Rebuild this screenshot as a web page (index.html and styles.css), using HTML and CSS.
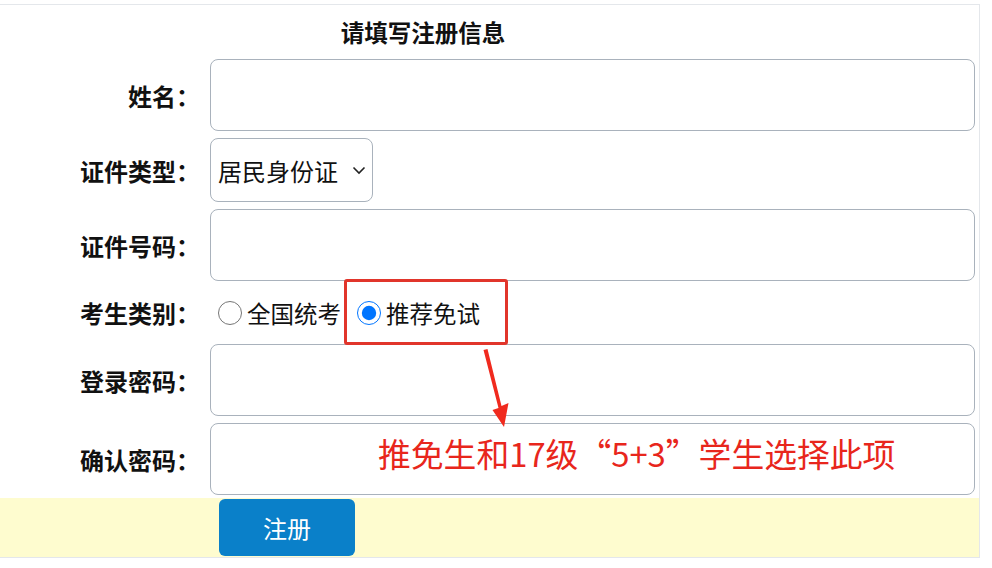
FILE: index.html
```html
<!DOCTYPE html>
<html lang="zh-CN">
<head>
  <meta charset="UTF-8" />
  <meta name="viewport" content="width=device-width, initial-scale=1.0" />
  <title>注册</title>
  <link rel="stylesheet" href="styles.css">
</head>
<body>
  <div class="reg-box">
    <h2 class="reg-title">请填写注册信息</h2>
    <form class="reg-form">
      <label class="row-label">姓名：</label>
      <div class="row-field"><input class="txt" type="text" /></div>

      <label class="row-label">证件类型：</label>
      <div class="row-field">
        <span class="sel-wrap">
          <select class="sel">
            <option>居民身份证</option>
            <option>护照</option>
          </select>
          <svg class="sel-arrow" width="14" height="9" viewBox="0 0 14 9"><path d="M1.5 1.5 L7 7 L12.5 1.5" fill="none" stroke="#222" stroke-width="1.6"/></svg>
        </span>
      </div>

      <label class="row-label">证件号码：</label>
      <div class="row-field"><input class="txt" type="text" /></div>

      <label class="row-label radio-label">考生类别：</label>
      <div class="row-field radios">
        <label class="opt"><input type="radio" name="kind" />全国统考</label>
        <label class="opt"><input type="radio" name="kind" checked />推荐免试</label>
      </div>

      <label class="row-label">登录密码：</label>
      <div class="row-field"><input class="txt" type="password" /></div>

      <label class="row-label">确认密码：</label>
      <div class="row-field"><input class="txt" type="password" /></div>
    </form>
    <div class="btn-bar">
      <button class="reg-btn" type="button">注册</button>
    </div>
  </div>

  <!-- annotation layer -->
  <div class="mark-box"></div>
  <svg class="mark-arrow" width="30" height="80" viewBox="480 348 30 80">
    <path d="M483.5 350 L487.5 349 L501.5 406 L508.5 403 L504 427 L492.5 410 L498.5 408 Z" fill="#f02a1e"/>
  </svg>
  <div class="mark-text">推免生和17级“5+3”学生选择此项</div>
</body>
</html>
```

FILE: styles.css
```css
body { margin: 0; background: #fff; color: #111; font-family: "Noto Sans CJK SC", "Noto Sans", sans-serif; }
.reg-box { margin-top: 4px; width: 979px; border-top: 1px solid #e4e7eb; border-right: 1px solid #e4e7eb; border-bottom: 1px solid #e4e7eb; }
.reg-title { margin: 0; height: 54px; line-height: 54px; width: 846px; text-align: center; font-size: 23.5px; font-weight: bold; }
.reg-form { display: grid; grid-template-columns: 210px 1fr; row-gap: 7px; padding-right: 4px; }
.row-label { display: flex; align-items: center; justify-content: flex-end; padding-right: 10px; font-size: 24px; font-weight: bold; }
.row-field { display: flex; align-items: center; }
.txt { box-sizing: border-box; width: 100%; height: 72px; border: 1px solid #a9b2bc; border-radius: 8px; padding: 0 10px; font-size: 22px; outline: none; }
.sel-wrap { position: relative; display: inline-block; }
.sel { box-sizing: border-box; appearance: none; -webkit-appearance: none; width: 163px; height: 64px; border: 1px solid #a9b2bc; border-radius: 8px; padding: 0 0 0 7px; background: #fff; color: #111; font-family: inherit; font-size: 24px; outline: none; }
.sel-arrow { position: absolute; right: 7px; top: 28px; pointer-events: none; }
.radios { height: 49px; padding-left: 8px; gap: 16px; font-size: 23.5px; }
.opt { display: flex; align-items: center; gap: 5px; }
.opt input { width: 24px; height: 24px; margin: 0; }
.btn-bar { margin-top: 3px; height: 59px; background: #fefccf; padding: 1px 0 0 219px; box-sizing: border-box; }
.reg-btn { width: 136px; height: 57px; border: none; border-radius: 6px; background: #0a80c9; color: #fff; font-family: inherit; font-size: 24px; cursor: pointer; }
.mark-box { position: absolute; left: 344px; top: 279px; width: 158px; height: 60px; border: 3px solid #e1352b; border-radius: 3px; }
.mark-arrow { position: absolute; left: 480px; top: 348px; }
.mark-text { position: absolute; left: 378px; top: 431px; font-size: 32.8px; line-height: 44px; color: #e8261c; white-space: nowrap; }
```
